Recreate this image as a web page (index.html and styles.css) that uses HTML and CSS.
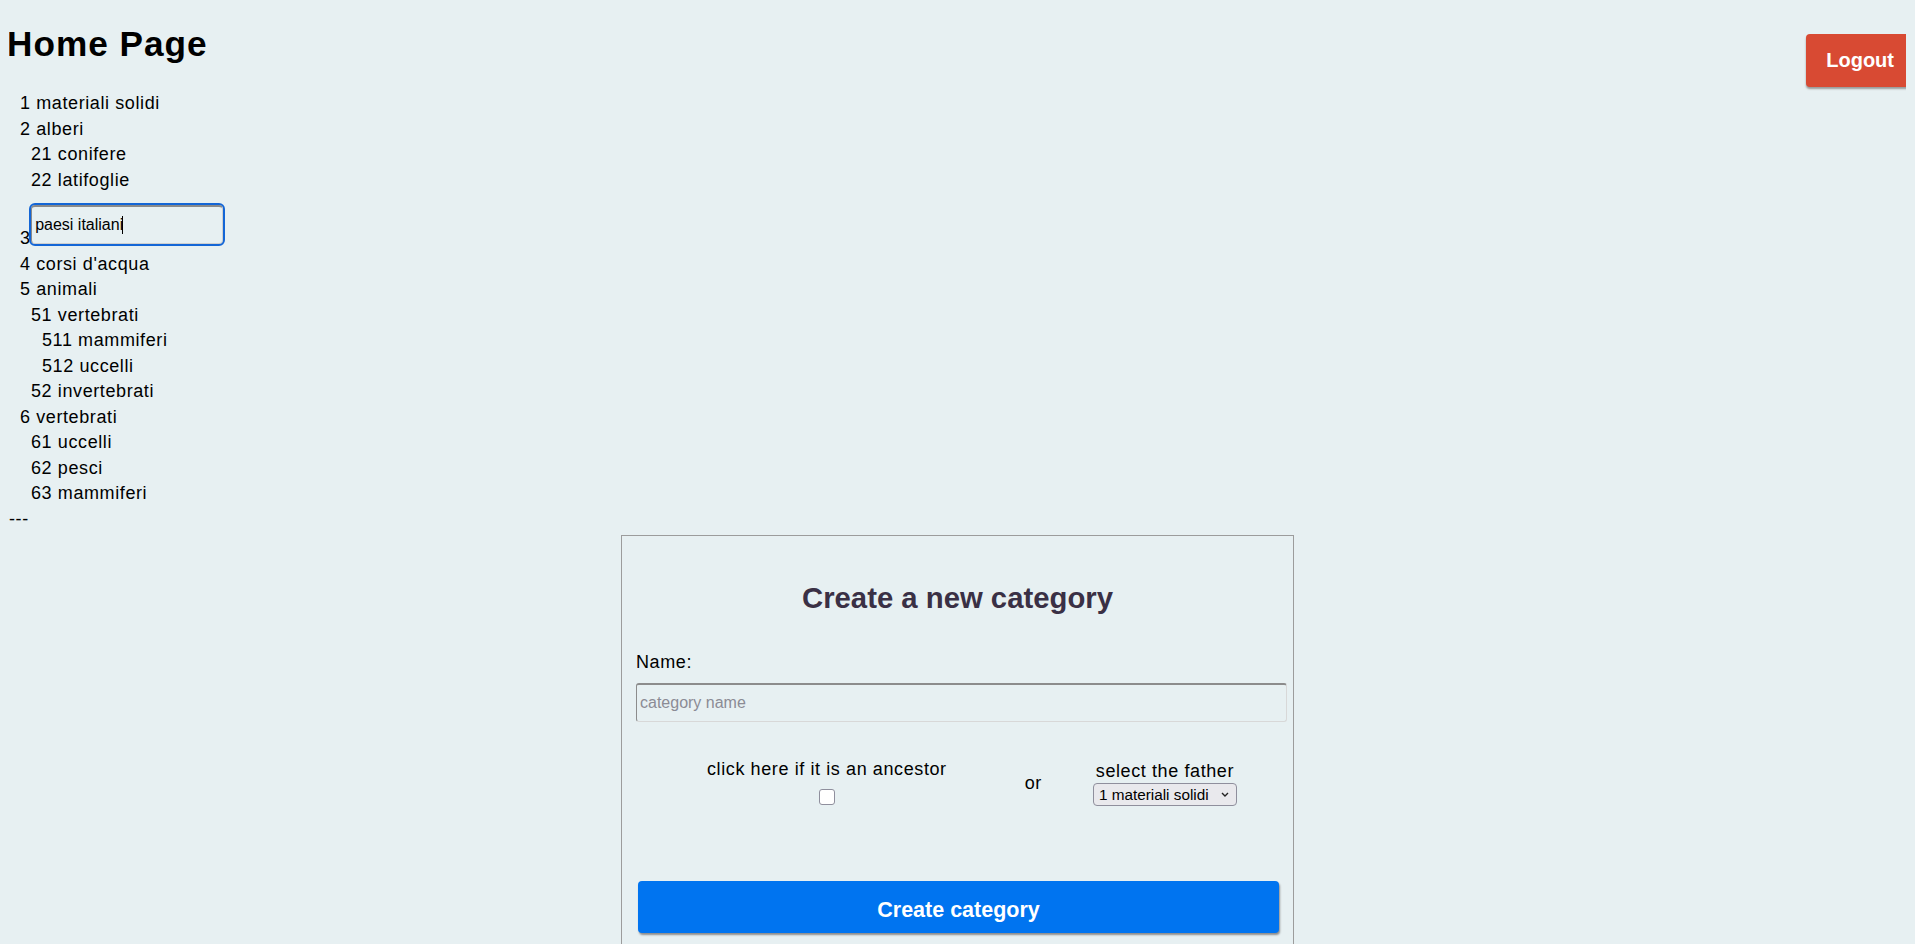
FILE: index.html
```html
<!DOCTYPE html>
<html lang="it">
<head>
<meta charset="utf-8">
<title>Home Page</title>
<link rel="stylesheet" href="styles.css">
</head>
<body>
<header class="top">
  <h1 class="page-title">Home Page</h1>
  <button class="logout" type="button">Logout</button>
</header>

<div class="tree">
  <div class="cat">1 materiali solidi</div>
  <div class="cat">2 alberi
    <div class="cat">21 conifere</div>
    <div class="cat">22 latifoglie</div>
  </div>
  <div class="cat">3<span class="edit"><input class="edit-input" type="text" value="paesi italiani"><span class="caret"></span></span></div>
  <div class="cat">4 corsi d'acqua</div>
  <div class="cat">5 animali
    <div class="cat">51 vertebrati
      <div class="cat">511 mammiferi</div>
      <div class="cat">512 uccelli</div>
    </div>
    <div class="cat">52 invertebrati</div>
  </div>
  <div class="cat">6 vertebrati
    <div class="cat">61 uccelli</div>
    <div class="cat">62 pesci</div>
    <div class="cat">63 mammiferi</div>
  </div>
</div>
<div class="sep">---</div>

<form class="card">
  <h2 class="card-title">Create a new category</h2>
  <label class="field-label" for="name">Name:</label>
  <input class="name-input" id="name" type="text" placeholder="category name">
  <div class="parent-row">
    <div class="ancestor-col">
      <span>click here if it is an ancestor</span>
      <input class="checkbox" type="checkbox">
    </div>
    <span class="or">or</span>
    <div class="father-col">
      <span>select the father</span>
      <span class="select-wrap">
        <select class="father-select">
          <option>1 materiali solidi</option>
          <option>2 alberi</option>
          <option>21 conifere</option>
          <option>22 latifoglie</option>
          <option>3 paesi italiani</option>
          <option>4 corsi d'acqua</option>
          <option>5 animali</option>
          <option>6 vertebrati</option>
        </select>
        <svg class="chev" viewBox="0 0 8 5" aria-hidden="true"><path d="M1 1 L4 4 L7 1" fill="none" stroke="#222" stroke-width="1.4"/></svg>
      </span>
    </div>
  </div>
  <button class="create-btn" type="button">Create category</button>
</form>
</body>
</html>
```

FILE: styles.css
```css
html {
  overflow: hidden;
}

body {
  margin: 9px;
  background: #e7f0f2;
  font-family: "Liberation Sans", Arial, sans-serif;
  font-size: 18px;
  letter-spacing: 0.6px;
  color: #000;
}

.top {
  display: flex;
  justify-content: space-between;
  align-items: flex-start;
  margin-right: -8px;
}

.page-title {
  margin: 15px 0 27px -2px;
  font-size: 35.2px;
  font-weight: bold;
  letter-spacing: 1px;
  line-height: normal;
}

.logout {
  flex: none;
  margin: 25px 0 0 0;
  padding: 15px 20px;
  font: bold 20px "Liberation Sans", Arial, sans-serif;
  line-height: 23px;
  letter-spacing: 0;
  color: #fff;
  background: #d84a33;
  border: none;
  border-radius: 4px;
  box-shadow: 0 2px 2px #9a9a9a;
}

.cat {
  padding-left: 11px;
  line-height: 25.5px;
}

.edit {
  position: relative;
  display: inline-block;
  overflow: hidden;
  padding: 2px;
  margin: 10px 0 0 -1.5px;
  vertical-align: -2px;
  line-height: normal;
}

.edit-input {
  display: block;
  box-sizing: border-box;
  width: 192px;
  height: 39.4px;
  margin: 0;
  padding: 0 3px;
  font: 16px "Liberation Sans", Arial, sans-serif;
  letter-spacing: 0;
  color: #000;
  background: transparent;
  border: 1px solid #cfcfcf;
  border-top: 2px solid #8a8a8a;
  border-left-color: #8a8a8a;
  border-radius: 4px;
  outline: 2px solid #1466d6;
  outline-offset: 0;
}

.caret {
  position: absolute;
  left: 93px;
  top: 13px;
  width: 1px;
  height: 18px;
  background: #000;
}

.sep {
  line-height: 25.5px;
}

.card {
  display: block;
  box-sizing: border-box;
  width: 673px;
  margin: 2.5px auto 0;
  padding: 0 14px 16px;
  border: 1px solid #9c9c9c;
}

.card-title {
  margin: 45px 0 0;
  font-size: 29.3px;
  font-weight: bold;
  line-height: normal;
  letter-spacing: 0;
  text-align: center;
  color: #3a3045;
}

.field-label {
  display: block;
  margin-top: 37px;
}

.name-input {
  display: block;
  box-sizing: content-box;
  width: 100%;
  height: 36px;
  margin: 10px 0 0;
  padding: 0 3px;
  font: 16px "Liberation Sans", Arial, sans-serif;
  letter-spacing: 0;
  color: #000;
  background: transparent;
  border: 1px solid #d8d8d8;
  border-top: 2px solid #8c8c8c;
  border-left-color: #8c8c8c;
  border-radius: 3px;
}

.name-input::placeholder {
  color: #8b8b95;
}

.parent-row {
  display: flex;
  align-items: center;
  margin-top: 37px;
  padding-left: 71px;
}

.ancestor-col {
  display: flex;
  flex-direction: column;
  align-items: center;
  margin-right: 78px;
}

.checkbox {
  appearance: none;
  box-sizing: border-box;
  width: 16px;
  height: 16px;
  margin: 9.5px 0 3px;
  border: 1.6px solid #8f8f9d;
  border-radius: 3px;
  background: #fff;
}

.or {
  margin-right: 51px;
}

.father-col {
  display: flex;
  flex-direction: column;
  align-items: center;
}

.select-wrap {
  position: relative;
  display: inline-block;
  margin-top: 1px;
}

.father-select {
  appearance: none;
  display: block;
  box-sizing: border-box;
  height: 23.5px;
  margin: 0;
  padding: 2px 27px 2px 5px;
  font: 15.3px "Liberation Sans", Arial, sans-serif;
  letter-spacing: 0;
  color: #000;
  background: #e9e9ed;
  border: 1px solid #8f8f9d;
  border-radius: 4px;
}

.chev {
  position: absolute;
  right: 8px;
  top: 9px;
  width: 8px;
  height: 5px;
  pointer-events: none;
}

.create-btn {
  display: block;
  box-sizing: border-box;
  width: calc(100% - 2px);
  height: 52px;
  margin: 73px 0 0 2px;
  padding: 7px 0 0;
  font: bold 21.5px "Liberation Sans", Arial, sans-serif;
  letter-spacing: 0;
  color: #fff;
  background: #0074f0;
  border: none;
  border-radius: 4px;
  box-shadow: 1px 2px 2px #8d8d8d;
}
```
